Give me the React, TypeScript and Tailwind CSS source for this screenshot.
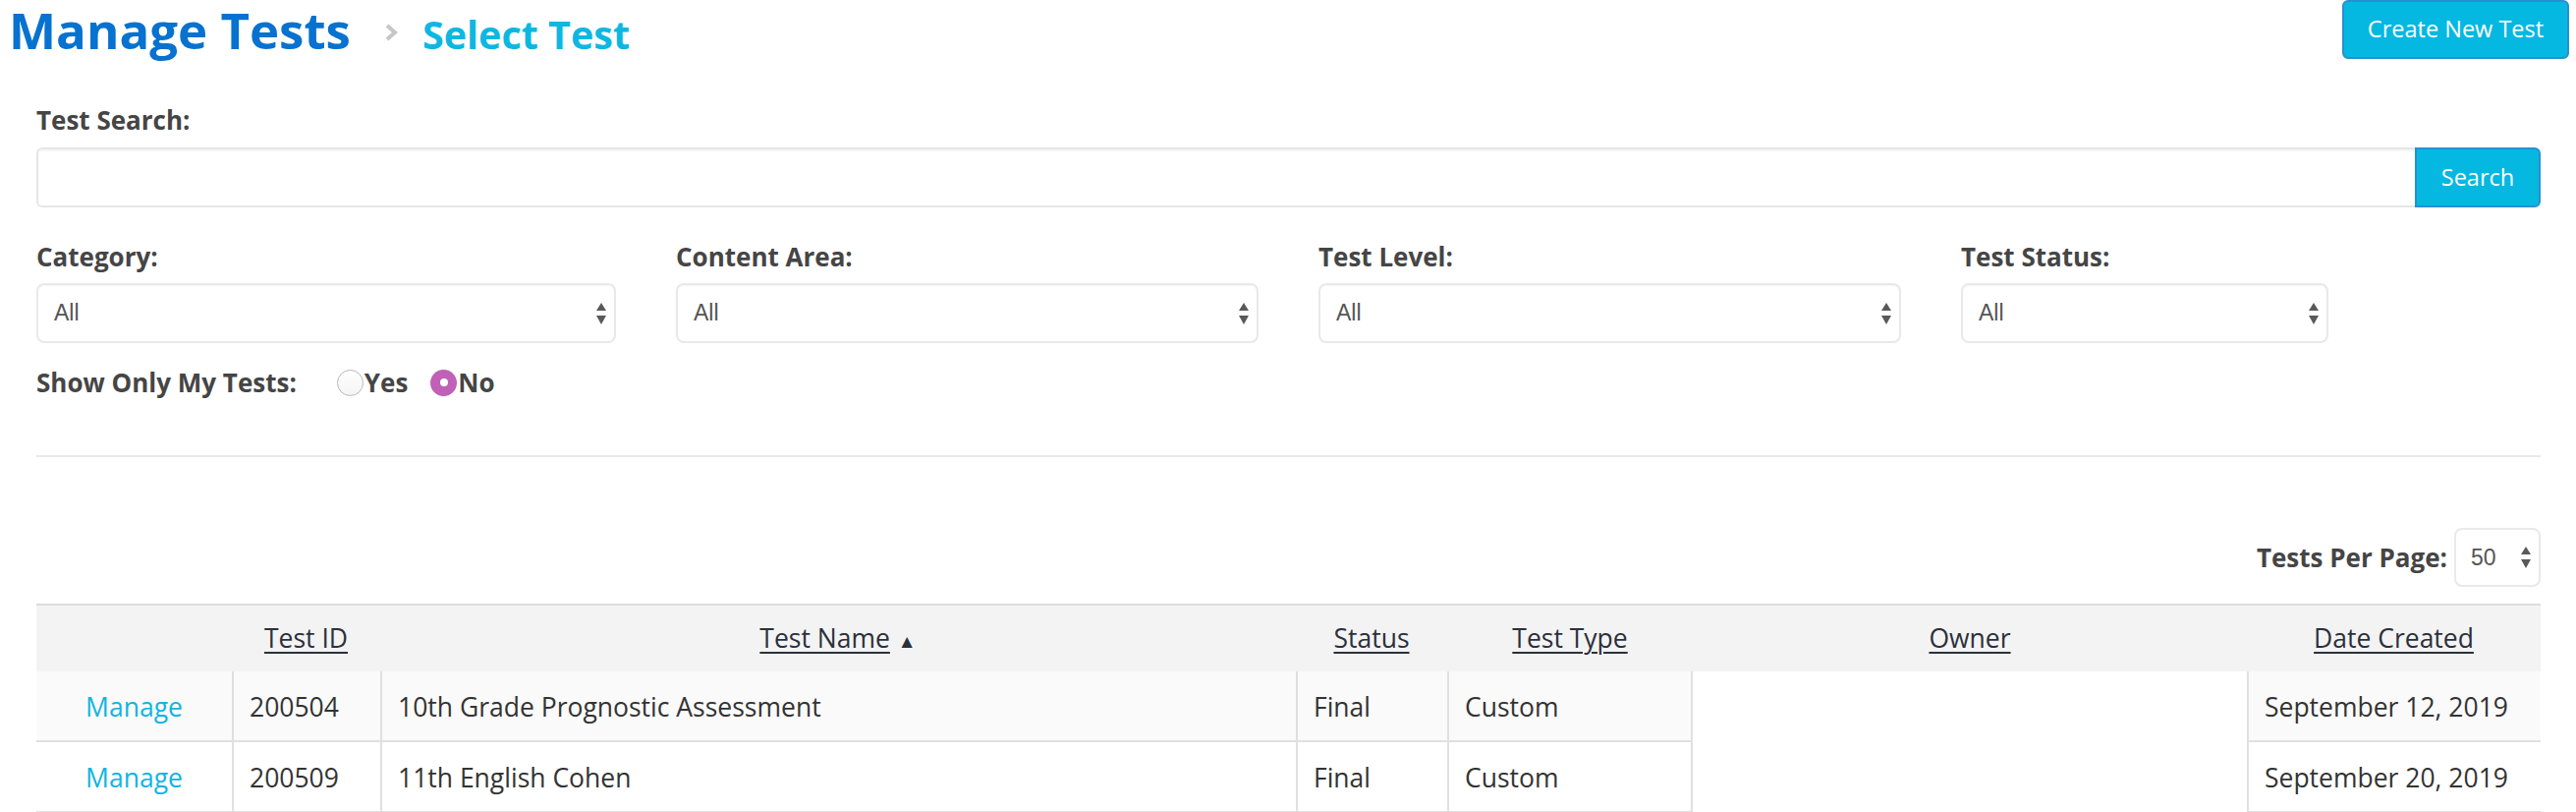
import React from 'react'

type Row = {
  id: string
  name: string
  status: string
  type: string
  owner: string
  created: string
}

const ROWS: Row[] = [
  { id: '200504', name: '10th Grade Prognostic Assessment', status: 'Final', type: 'Custom', owner: '', created: 'September 12, 2019' },
  { id: '200509', name: '11th English Cohen', status: 'Final', type: 'Custom', owner: '', created: 'September 20, 2019' },
]

const COLS = 'grid grid-cols-[199px_151px_932px_154px_250px_564px_299px]'

function Arrows() {
  return (
    <svg width="10" height="22" viewBox="0 0 10 22" className="shrink-0">
      <polygon points="5,0 10,8 0,8" fill="#595959" />
      <polygon points="0,13 10,13 5,22" fill="#595959" />
    </svg>
  )
}

function FakeSelect({ value, className }: { value: string; className: string }) {
  return (
    <div
      className={`flex h-[61px] items-center justify-between rounded-[8px] border-2 border-[#e9e9e9] bg-white pl-[16px] pr-[8px] shadow-[inset_0_1px_1px_rgba(0,0,0,0.04)] ${className}`}
    >
      <span className="font-['Liberation_Sans',Arial,sans-serif] text-[23px] text-[#555]">{value}</span>
      <Arrows />
    </div>
  )
}

function Radio({ checked }: { checked: boolean }) {
  if (checked) {
    return (
      <span className="flex h-[27px] w-[27px] items-center justify-center rounded-full bg-[#c060b6]">
        <span className="h-[8px] w-[8px] rounded-full bg-white" />
      </span>
    )
  }
  return (
    <span className="h-[27px] w-[27px] rounded-full border-[1.5px] border-[#b8b8b8] bg-gradient-to-b from-white to-[#f4f4f4]" />
  )
}

function HeaderCell({ children }: { children?: React.ReactNode }) {
  return <div className="flex items-center justify-center">{children}</div>
}

function SortLink({ label, arrow }: { label: string; arrow?: boolean }) {
  return (
    <span className="flex items-baseline">
      <span className="underline decoration-[1.5px] underline-offset-[4px]">{label}</span>
      {arrow && <span className="ml-[8px] text-[19px]">▲</span>}
    </span>
  )
}

export default function App() {
  const filters = [
    { label: 'Category:', w: 'w-[590px]' },
    { label: 'Content Area:', w: 'w-[593px]' },
    { label: 'Test Level:', w: 'w-[593px]' },
    { label: 'Test Status:', w: 'w-[374px]' },
  ]

  return (
    <div className="min-h-[826px] w-[2622px] overflow-hidden bg-white font-['Open_Sans',sans-serif] text-[#454545]">
      {/* Title bar */}
      <div className="flex h-[60px] items-start justify-between pl-[9px] pr-[7px]">
        <div className="flex h-[60px] items-baseline">
          <h1 className="text-[51px] font-bold leading-[60px] text-[#0772cf]">Manage Tests</h1>
          <svg width="13" height="18" viewBox="0 0 13 18" className="ml-[35px] mr-[25px] mt-[6px] self-center">
            <polyline points="2,2 10,9 2,16" fill="none" stroke="#c6c6c6" strokeWidth="4" />
          </svg>
          <h2 className="text-[39.5px] font-bold leading-[60px] text-[#0cb8e2]">Select Test</h2>
        </div>
        <button className="h-[60px] w-[231px] rounded-[6px] border-2 border-[#2a8fcf] bg-[#04b8e2] text-[23.5px] text-white">
          Create New Test
        </button>
      </div>

      <div className="pl-[37px] pr-[36px]">
        {/* Search */}
        <div className="mt-[44px] text-[26px] font-bold leading-[36px]">Test Search:</div>
        <div className="mt-[10px] flex h-[61px]">
          <div className="flex-1 rounded-l-[6px] border-2 border-r-0 border-[#e6e6e6] shadow-[inset_0_2px_2px_rgba(0,0,0,0.04)]" />
          <button className="w-[128px] rounded-r-[6px] border-2 border-[#2a8fcf] bg-[#04b8e2] text-[23.5px] text-white">
            Search
          </button>
        </div>

        {/* Filters */}
        <div className="mt-[32px] flex gap-[61px]">
          {filters.map((f) => (
            <div key={f.label} className={f.w}>
              <div className="text-[26px] font-bold leading-[36px]">{f.label}</div>
              <FakeSelect value="All" className="mt-[9px] w-full" />
            </div>
          ))}
        </div>

        {/* Owner toggle */}
        <div className="mt-[22px] flex h-[36px] items-center text-[26px] font-bold leading-[36px]">
          <span>Show Only My Tests:</span>
          <span className="ml-[41px] flex items-center">
            <Radio checked={false} />
            <span className="ml-[1px]">Yes</span>
          </span>
          <span className="ml-[23px] flex items-center">
            <Radio checked />
            <span className="ml-[1px]">No</span>
          </span>
        </div>

        <div className="mt-[56px] border-t-2 border-[#e8e8e8]" />

        {/* Per page */}
        <div className="mt-[72px] flex items-center justify-end gap-[7px]">
          <span className="text-[26px] font-bold leading-[36px]">Tests Per Page:</span>
          <div className="flex h-[60px] w-[88px] items-center justify-between rounded-[8px] border-2 border-[#e9e9e9] pl-[15px] pr-[8px]">
            <span className="font-['Liberation_Sans',Arial,sans-serif] text-[23px] text-[#555]">50</span>
            <Arrows />
          </div>
        </div>

        {/* Table */}
        <div className="mt-[17px] text-[26.5px] text-[#333]">
          <div className={`${COLS} h-[69px] border-t-2 border-[#dddddd] bg-[#f3f3f3] text-[#2b303b]`}>
            <HeaderCell />
            <HeaderCell><SortLink label="Test ID" /></HeaderCell>
            <HeaderCell><SortLink label="Test Name" arrow /></HeaderCell>
            <HeaderCell><SortLink label="Status" /></HeaderCell>
            <HeaderCell><SortLink label="Test Type" /></HeaderCell>
            <HeaderCell><SortLink label="Owner" /></HeaderCell>
            <HeaderCell><SortLink label="Date Created" /></HeaderCell>
          </div>
          {ROWS.map((r, i) => {
            const bg = i % 2 === 0 ? 'bg-[#fafafa]' : 'bg-white'
            const cell = `flex h-[72px] items-center border-b-2 border-l-2 border-[#e0e0e0] px-[16px] pt-[4px] ${bg}`
            return (
              <div key={r.id} className={COLS}>
                <div className={`flex h-[72px] items-center justify-center border-b-2 border-[#e0e0e0] pt-[4px] ${bg}`}>
                  <span className="text-[#12b4e1]">Manage</span>
                </div>
                <div className={cell}>{r.id}</div>
                <div className={cell}>{r.name}</div>
                <div className={cell}>{r.status}</div>
                <div className={`${cell} border-r-2`}>{r.type}</div>
                <div className="h-[72px]">{r.owner}</div>
                <div className={cell}>{r.created}</div>
              </div>
            )
          })}
        </div>
      </div>
    </div>
  )
}
